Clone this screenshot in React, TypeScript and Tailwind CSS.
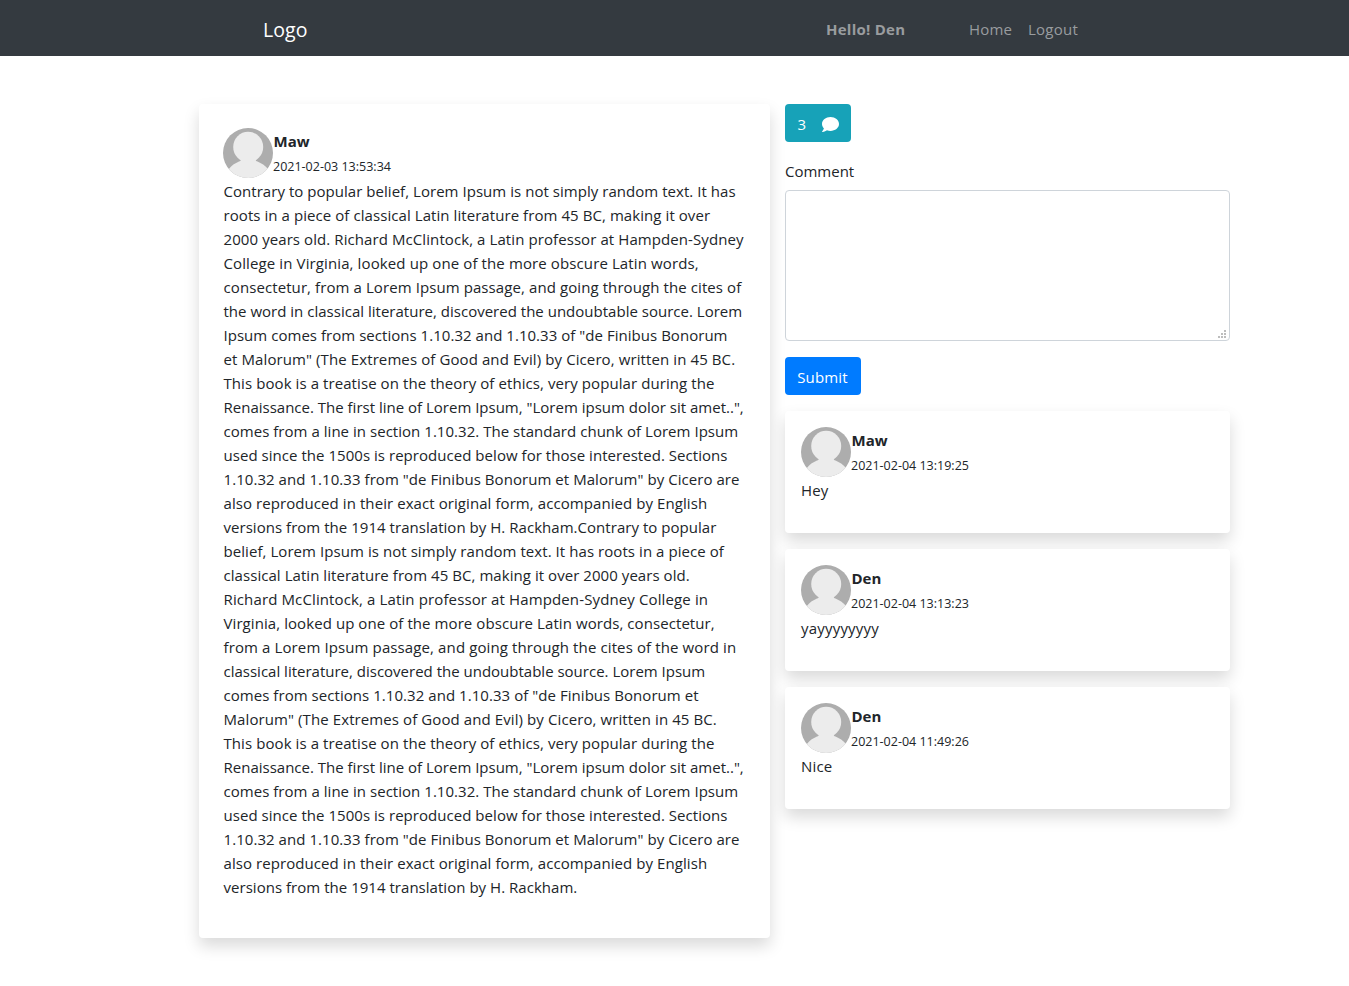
import { FaComment } from "react-icons/fa";

const article: [string, string][] = [
  ["Contrary to popular belief, Lorem Ipsum is not simply random text. It has", "tracking-[0.04px]"],
  ["roots in a piece of classical Latin literature from 45 BC, making it over", "tracking-[0.07px]"],
  ["2000 years old. Richard McClintock, a Latin professor at Hampden-Sydney", "tracking-[0.085px]"],
  ["College in Virginia, looked up one of the more obscure Latin words,", "tracking-[0.115px]"],
  ["consectetur, from a Lorem Ipsum passage, and going through the cites of", "tracking-[0.09px]"],
  ["the word in classical literature, discovered the undoubtable source. Lorem", "tracking-[0.012px]"],
  ['Ipsum comes from sections 1.10.32 and 1.10.33 of "de Finibus Bonorum', "tracking-[0.035px]"],
  ['et Malorum" (The Extremes of Good and Evil) by Cicero, written in 45 BC.', "tracking-[0.1px]"],
  ["This book is a treatise on the theory of ethics, very popular during the", "tracking-[0.08px]"],
  ['Renaissance. The first line of Lorem Ipsum, "Lorem ipsum dolor sit amet..",', "tracking-[0px]"],
  ["comes from a line in section 1.10.32. The standard chunk of Lorem Ipsum", "tracking-[0.035px]"],
  ["used since the 1500s is reproduced below for those interested. Sections", "tracking-[0.04px]"],
  ['1.10.32 and 1.10.33 from "de Finibus Bonorum et Malorum" by Cicero are', "tracking-[0.055px]"],
  ["also reproduced in their exact original form, accompanied by English", "tracking-[0.075px]"],
  ["versions from the 1914 translation by H. Rackham.Contrary to popular", "tracking-[0.035px]"],
  ["belief, Lorem Ipsum is not simply random text. It has roots in a piece of", "tracking-[0.065px]"],
  ["classical Latin literature from 45 BC, making it over 2000 years old.", "tracking-[0.055px]"],
  ["Richard McClintock, a Latin professor at Hampden-Sydney College in", "tracking-[0.125px]"],
  ["Virginia, looked up one of the more obscure Latin words, consectetur,", "tracking-[0.075px]"],
  ["from a Lorem Ipsum passage, and going through the cites of the word in", "tracking-[0.115px]"],
  ["classical literature, discovered the undoubtable source. Lorem Ipsum", "tracking-[0px]"],
  ['comes from sections 1.10.32 and 1.10.33 of "de Finibus Bonorum et', "tracking-[0.05px]"],
  ['Malorum" (The Extremes of Good and Evil) by Cicero, written in 45 BC.', "tracking-[0.095px]"],
  ["This book is a treatise on the theory of ethics, very popular during the", "tracking-[0.08px]"],
  ['Renaissance. The first line of Lorem Ipsum, "Lorem ipsum dolor sit amet..",', "tracking-[0px]"],
  ["comes from a line in section 1.10.32. The standard chunk of Lorem Ipsum", "tracking-[0.035px]"],
  ["used since the 1500s is reproduced below for those interested. Sections", "tracking-[0.04px]"],
  ['1.10.32 and 1.10.33 from "de Finibus Bonorum et Malorum" by Cicero are', "tracking-[0.055px]"],
  ["also reproduced in their exact original form, accompanied by English", "tracking-[0.075px]"],
  ["versions from the 1914 translation by H. Rackham.", "tracking-[0.03px]"],
];

const comments = [
  { name: "Maw", date: "2021-02-04 13:19:25", text: "Hey", spacing: "tracking-[0.1px]" },
  { name: "Den", date: "2021-02-04 13:13:23", text: "yayyyyyyyy", spacing: "tracking-[0.2px]" },
  { name: "Den", date: "2021-02-04 11:49:26", text: "Nice", spacing: "tracking-[0.2px]" },
];

function Avatar() {
  return (
    <svg viewBox="0 0 50 50" className="size-[50px] shrink-0 rounded-full">
      <rect width="50" height="50" fill="#adadad" />
      <ellipse cx="25.2" cy="19" rx="15" ry="15.3" fill="#ececec" />
      <path d="M17.5 31.5C18 32.5 17.5 33 16 33.6C12 35.3 8.5 37.5 5.5 41.5V50H45.5V41.5C42 37.5 38.5 35.3 34.5 33.6C33 33 32.5 32.5 33 31.5Z" fill="#ececec" />
    </svg>
  );
}

function Author({ name, date }: { name: string; date: string }) {
  return (
    <div className="flex h-[50px]">
      <Avatar />
      <div className="flex flex-col gap-0.5 pt-px">
        <div className="h-6 pl-[0.4px] font-bold leading-6 tracking-[0.1px]">{name}</div>
        <div className="h-6 text-[12.5px] leading-6">{date}</div>
      </div>
    </div>
  );
}

export default function App() {
  return (
    <div className="min-h-[986px] bg-white font-['Open_Sans',sans-serif] text-[15px] leading-6 text-[#212529]">
      <nav className="flex h-14 items-center justify-between bg-[#343a40] pl-[263px] pr-[270px] pt-0.5">
        <a className="pt-px text-[19.5px] leading-7 tracking-[0.1px] text-white">Logo</a>
        <div className="flex text-[#999c9f]">
          <span className="w-[143px] font-bold tracking-[0.25px]">Hello! Den</span>
          <a className="w-[59px] tracking-[0.15px]">Home</a>
          <a className="w-[51px] tracking-[0.25px]">Logout</a>
        </div>
      </nav>
      <main className="flex items-start gap-[15px] pl-[199px] pt-12">
        <article className="h-[834px] w-[571px] rounded bg-white p-6 shadow-[0_8px_16px_rgba(0,0,0,0.15)]">
          <Author name="Maw" date="2021-02-03 13:53:34" />
          <p className="pl-[0.5px] pt-px">
            {article.map(([line, spacing], i) => (
              <span key={i} className={`block whitespace-nowrap ${spacing}`}>{line}</span>
            ))}
          </p>
        </article>
        <section className="flex w-[445px] flex-col items-start gap-4">
          <button className="flex h-[38px] w-[66px] items-center justify-between rounded bg-[#17a2b8] px-3 text-white">
            <span className="pl-[0.5px] pt-px">3</span>
            <FaComment className="mt-[3px] size-[17px]" />
          </button>
          <div className="flex w-full flex-col">
            <label className="h-8 pt-px">Comment</label>
            <div className="relative h-[151px]">
              <textarea className="block size-full resize-none rounded border border-[#ced4da] px-3 py-1.5 outline-none" />
              <svg viewBox="0 0 8 8" className="absolute bottom-[3px] right-1 size-2" fill="#bdbdbd" shapeRendering="crispEdges">
                <path d="M6 0h2v2H6zM3 3h2v2H3zM6 3h2v2H6zM0 6h2v2H0zM3 6h2v2H3zM6 6h2v2H6z" />
              </svg>
            </div>
          </div>
          <button className="h-[38px] w-[76px] rounded bg-[#007bff] pr-px pt-px tracking-[0.15px] text-white">Submit</button>
          {comments.map((c) => (
            <div key={c.date} className="h-[122px] w-full rounded bg-white p-4 shadow-[0_8px_16px_rgba(0,0,0,0.15)]">
              <Author name={c.name} date={c.date} />
              <p className={`pt-px ${c.spacing}`}>{c.text}</p>
            </div>
          ))}
        </section>
      </main>
    </div>
  );
}
